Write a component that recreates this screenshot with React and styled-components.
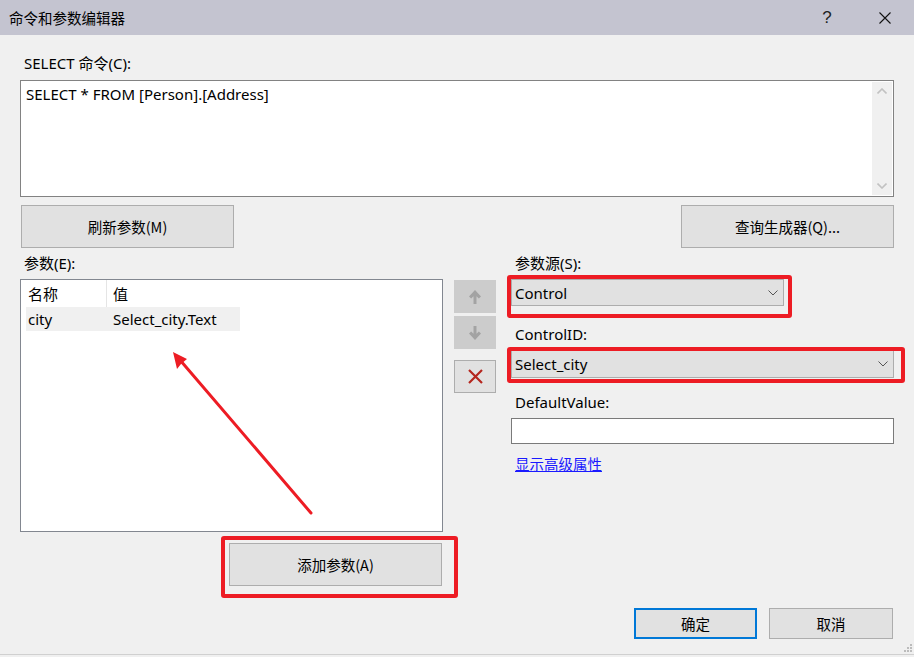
import styled, { createGlobalStyle } from "styled-components"

const GlobalStyle = createGlobalStyle`
  html, body {
    margin: 0;
    padding: 0;
    background: #f0f0f0;
  }
  body {
    font-family: "Noto Sans", "Noto Sans CJK SC", sans-serif;
    font-size: 15px;
    color: #000;
  }
`

const Window = styled.div`
  position: relative;
  width: 914px;
  height: 657px;
  background: #f0f0f0;
  display: flex;
  flex-direction: column;
  overflow: hidden;
`
const TitleBar = styled.div`
  height: 35px;
  background: #c4c4d0;
  display: flex;
  align-items: center;
  padding-left: 9px;
  font-family: "Noto Sans CJK SC", sans-serif;
  font-size: 14.5px;
`
const TitleText = styled.div`
  flex: 1;
`
const TitleButton = styled.div`
  width: 58px;
  height: 35px;
  display: flex;
  align-items: center;
  justify-content: center;
  font-family: "Liberation Sans", sans-serif;
  font-size: 17px;
  color: #222;
`
const Content = styled.div`
  padding: 0 20px;
  display: flex;
  flex-direction: column;
`
const Label = styled.div`
  height: 18px;
  line-height: 18px;
  margin-top: ${p => p.$top || 0}px;
  margin-bottom: ${p => p.$bottom || 7}px;
  padding-left: 4px;
  white-space: nowrap;
`
const CommandBox = styled.div`
  height: 117px;
  box-sizing: border-box;
  border: 1px solid #828282;
  background: #fff;
  display: flex;
`
const CommandText = styled.div`
  flex: 1;
  padding: 4px 5px;
  line-height: 18px;
`
const ScrollBar = styled.div`
  width: 20px;
  margin: 1px 1px 1px 0;
  background: #f0f0f0;
  display: flex;
  flex-direction: column;
  justify-content: space-between;
  align-items: center;
  padding: 6px 0;
`
const ButtonRow = styled.div`
  display: flex;
  justify-content: space-between;
  margin-top: 8px;
  padding-left: 1px;
`
const Button = styled.button`
  width: ${p => p.$w || 213}px;
  height: ${p => p.$h || 43}px;
  box-sizing: border-box;
  background: #e1e1e1;
  border: ${p => (p.$default ? "2px solid #0078d7" : "1px solid #adadad")};
  font-family: "Noto Sans CJK SC", sans-serif;
  font-size: 14.5px;
  color: #000;
  padding: 0;
  cursor: default;
`
const Lower = styled.div`
  display: grid;
  grid-template-columns: 423px 42px 387px;
  column-gap: 11px;
  margin-top: 6px;
`
const Column = styled.div`
  display: flex;
  flex-direction: column;
  padding-top: ${p => p.$top || 0}px;
  padding-left: ${p => p.$left || 0}px;
`
const ListBox = styled.div`
  height: 253px;
  box-sizing: border-box;
  border: 1px solid #828790;
  background: #fff;
  padding: 0 0 0 5px;
`
const ListRow = styled.div`
  display: grid;
  grid-template-columns: 80px 134px;
  height: ${p => (p.$head ? 27 : 24)}px;
  line-height: ${p => (p.$head ? 27 : 24)}px;
  & > div {
    background: ${p => (p.$head ? "#fff" : "#f0f0f0")};
    font-family: ${p => (p.$head ? '"Noto Sans CJK SC", sans-serif' : "inherit")};
  }
  & > div + div {
    border-left: 1px solid ${p => (p.$head ? "#e5e5e5" : "#f0f0f0")};
    padding-left: 6px;
  }
  & > div:first-child {
    padding-left: 2px;
  }
`
const Cell = styled.div`
  white-space: nowrap;
`
const SideButton = styled.div`
  height: 33px;
  box-sizing: border-box;
  margin-bottom: ${p => p.$gap || 3}px;
  display: flex;
  align-items: center;
  justify-content: center;
  background: ${p => (p.$disabled ? "#cccccc" : "#e1e1e1")};
  border: 1px solid ${p => (p.$disabled ? "#cccccc" : "#adadad")};
`
const Marked = styled.div`
  position: relative;
  align-self: flex-start;
  margin-top: ${p => p.$mt || 0}px;
  margin-left: ${p => p.$ml || 0}px;
  &::after {
    content: "";
    position: absolute;
    top: ${p => p.$t}px;
    left: ${p => p.$l}px;
    right: ${p => p.$r}px;
    bottom: ${p => p.$b}px;
    border: 4px solid #ed1c24;
    border-radius: 3px;
    pointer-events: none;
  }
`
const Select = styled.div`
  width: ${p => p.$w}px;
  height: ${p => p.$h}px;
  box-sizing: border-box;
  background: #e1e1e1;
  border: 1px solid #adadad;
  display: flex;
  align-items: center;
  justify-content: space-between;
  padding: 0 5px 0 3px;
`
const TextInput = styled.div`
  height: 26px;
  box-sizing: border-box;
  border: 1px solid #7a7a7a;
  background: #fff;
`
const Link = styled.a`
  margin-top: 11px;
  padding-left: 4px;
  line-height: 18px;
  color: #1a1aff;
  text-decoration: underline;
  font-family: "Noto Sans CJK SC", sans-serif;
  font-size: 14.5px;
`
const Footer = styled.div`
  display: flex;
  justify-content: flex-end;
  gap: 12px;
  margin-top: 22px;
  padding-right: 1px;
`
const BottomEdge = styled.div`
  margin-top: auto;
  height: 2px;
  border-top: 1px solid #d0d0d0;
  background: #f0f0f0;
`
const Grip = styled.svg`
  position: absolute;
  right: 2px;
  bottom: 5px;
`
const Annotation = styled.svg`
  position: absolute;
  left: 0;
  top: 0;
  pointer-events: none;
`

const Chevron = ({ up, thick, color = "#555" }) => (
  <svg width="10" height="6" viewBox="0 0 10 6">
    <polyline
      points={up ? "0.5,5.5 5,1 9.5,5.5" : "0.5,0.5 5,5 9.5,0.5"}
      fill="none"
      stroke={color}
      strokeWidth={thick ? 1.6 : 1}
    />
  </svg>
)

const ArrowIcon = ({ down }) => (
  <svg width="14" height="16" viewBox="0 0 14 16">
    <g transform={down ? "rotate(180 7 8)" : undefined}>
      <path d="M7 1 L13 7.5 L10.8 9.6 L8.5 7.2 L8.5 15 L5.5 15 L5.5 7.2 L3.2 9.6 L1 7.5 Z" fill="#a3a3a3" />
    </g>
  </svg>
)

export default function App() {
  return (
    <>
      <GlobalStyle />
      <Window>
        <TitleBar>
          <TitleText>命令和参数编辑器</TitleText>
          <TitleButton>?</TitleButton>
          <TitleButton>
            <svg width="12" height="12" viewBox="0 0 12 12">
              <path d="M0.5 0.5 L11.5 11.5 M11.5 0.5 L0.5 11.5" stroke="#111" strokeWidth="1.1" />
            </svg>
          </TitleButton>
        </TitleBar>

        <Content>
          <Label $top={19} $bottom={8}>SELECT 命令(C):</Label>
          <CommandBox>
            <CommandText>SELECT * FROM [Person].[Address]</CommandText>
            <ScrollBar>
              <Chevron up thick color="#c2c2c2" />
              <Chevron thick color="#c2c2c2" />
            </ScrollBar>
          </CommandBox>

          <ButtonRow>
            <Button>刷新参数(M)</Button>
            <Button>查询生成器(Q)...</Button>
          </ButtonRow>

          <Lower>
            <Column>
              <Label>参数(E):</Label>
              <ListBox>
                <ListRow $head>
                  <Cell>名称</Cell>
                  <Cell>值</Cell>
                </ListRow>
                <ListRow>
                  <Cell>city</Cell>
                  <Cell>Select_city.Text</Cell>
                </ListRow>
              </ListBox>
              <Marked $t={-7} $l={-8} $r={-16} $b={-12} $mt={11} $ml={209}>
                <Button>添加参数(A)</Button>
              </Marked>
            </Column>

            <Column $top={26}>
              <SideButton $disabled>
                <ArrowIcon />
              </SideButton>
              <SideButton $disabled $gap={11}>
                <ArrowIcon down />
              </SideButton>
              <SideButton>
                <svg width="15" height="15" viewBox="0 0 15 15">
                  <path d="M1 1 L14 14 M14 1 L1 14" stroke="#b5261e" strokeWidth="2.2" />
                </svg>
              </SideButton>
            </Column>

            <Column $left={4}>
              <Label>参数源(S):</Label>
              <Marked $t={-4} $l={-4} $r={-8} $b={-12}>
                <Select $w={273} $h={27}>
                  <span>Control</span>
                  <Chevron />
                </Select>
              </Marked>
              <Label $top={19}>ControlID:</Label>
              <Marked $t={-3} $l={-4} $r={-11} $b={-5}>
                <Select $w={383} $h={28}>
                  <span>Select_city</span>
                  <Chevron />
                </Select>
              </Marked>
              <Label $top={15}>DefaultValue:</Label>
              <TextInput />
              <Link>显示高级属性</Link>
            </Column>
          </Lower>

          <Footer>
            <Button $w={123} $h={31} $default>确定</Button>
            <Button $w={124} $h={31}>取消</Button>
          </Footer>
        </Content>

        <BottomEdge />
        <Grip width="8" height="8" viewBox="0 0 8 8">
          <rect x="6" y="0" width="2" height="2" fill="#bcbcbc" />
          <rect x="3" y="3" width="2" height="2" fill="#bcbcbc" />
          <rect x="6" y="3" width="2" height="2" fill="#bcbcbc" />
          <rect x="0" y="6" width="2" height="2" fill="#bcbcbc" />
          <rect x="3" y="6" width="2" height="2" fill="#bcbcbc" />
          <rect x="6" y="6" width="2" height="2" fill="#bcbcbc" />
        </Grip>

        <Annotation width="914" height="657">
          <line x1="311" y1="513" x2="180" y2="360" stroke="#ed1c24" strokeWidth="3" strokeLinecap="round" />
          <polygon points="173,352 177,369 181,364 187,359" fill="#ed1c24" />
        </Annotation>
      </Window>
    </>
  )
}
